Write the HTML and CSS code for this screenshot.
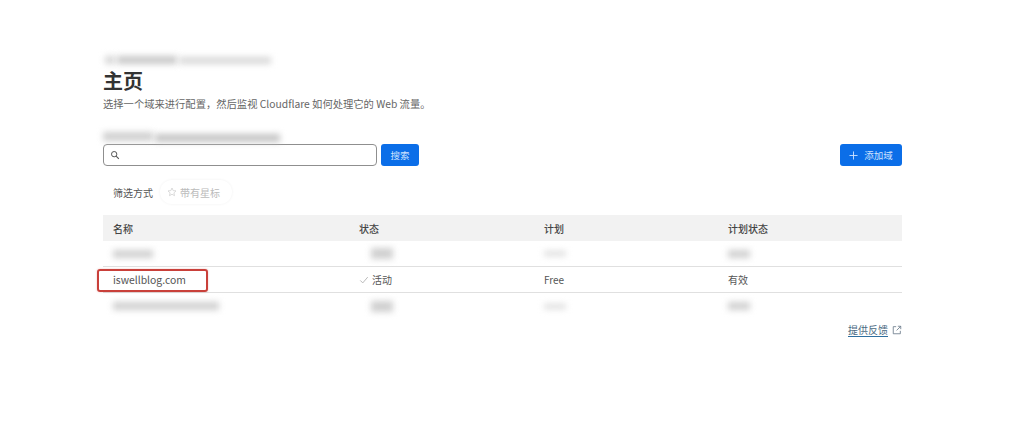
FILE: index.html
```html
<!DOCTYPE html>
<html lang="zh">
<head>
<meta charset="utf-8">
<title>主页</title>
<link rel="stylesheet" href="styles.css">
</head>
<body>
<main class="page">
  <div class="smudge-row crumb"><span class="smudge s-a"></span><span class="smudge s-b"></span><span class="smudge s-c"></span></div>
  <h1 class="title">主页</h1>
  <p class="subtitle">选择一个域来进行配置，然后监视 Cloudflare 如何处理它的 Web 流量。</p>
  <div class="smudge-row account"><span class="smudge s-d"></span><span class="smudge s-e"></span></div>
  <div class="toolbar">
    <div class="search-box">
      <svg class="search-icon" viewBox="0 0 12 12" width="10" height="10"><circle cx="5" cy="5" r="3.2" fill="none" stroke="#555" stroke-width="1.2"/><path d="M7.4 7.4 10.6 10.6" stroke="#555" stroke-width="1.3"/></svg>
    </div>
    <button class="btn btn-search">搜索</button>
    <button class="btn btn-add"><svg viewBox="0 0 10 10" width="9" height="9"><path d="M5 .5v9M.5 5h9" stroke="#cfe3ff" stroke-width="1"/></svg><span>添加域</span></button>
  </div>
  <div class="filter">
    <span class="filter-label">筛选方式</span>
    <span class="chip"><svg viewBox="0 0 12 12" width="10" height="10"><path d="M6 1.2 7.4 4.3 10.8 4.7 8.3 7 9 10.4 6 8.7 3 10.4 3.7 7 1.2 4.7 4.6 4.3Z" fill="none" stroke="#cfcfcf" stroke-width=".9"/></svg>带有星标</span>
  </div>
  <div class="table">
    <div class="row head"><span>名称</span><span>状态</span><span>计划</span><span>计划状态</span></div>
    <div class="row">
      <span><i class="smudge cell w-name"></i></span>
      <span class="status-cell"><i class="smudge cell w-short tall"></i></span>
      <span><i class="smudge cell w-short faint"></i></span>
      <span><i class="smudge cell w-short"></i></span>
    </div>
    <div class="row">
      <span class="domain-cell">iswellblog.com<b class="highlight"></b></span>
      <span class="active"><svg viewBox="0 0 12 12" width="10" height="10"><path d="M1.5 6.5 4.5 9.5 10.5 2.5" fill="none" stroke="#b4b4b4" stroke-width="1.1"/></svg>活动</span>
      <span>Free</span>
      <span>有效</span>
    </div>
    <div class="row last">
      <span><i class="smudge cell w-long"></i></span>
      <span class="status-cell"><i class="smudge cell w-short tall"></i></span>
      <span><i class="smudge cell w-short faint"></i></span>
      <span><i class="smudge cell w-short"></i></span>
    </div>
  </div>
  <div class="feedback">
    <a class="feedback-link">提供反馈</a>
    <svg viewBox="0 0 12 12" width="10" height="10"><path d="M5 2H1.5v8.5H10V7M7 1.5h3.5V5M10.5 1.5 5.5 6.5" fill="none" stroke="#6a7b8a" stroke-width="1"/></svg>
  </div>
</main>
</body>
</html>
```
FILE: styles.css
```css
* { box-sizing: border-box; }
html, body { margin: 0; height: 100%; background: #fff; overflow: hidden; }
body { font-family: "Noto Sans CJK SC", "Noto Sans", sans-serif; color: #444; }
.page { width: 799px; margin-left: 103px; padding-top: 54px; }
.smudge-row { display: flex; gap: 2px; align-items: center; }
.smudge { display: block; background: #c4c4c4; filter: blur(3px); }
.crumb { height: 12px; }
.s-a { width: 10px; height: 8px; margin-left: 2px; background: #d6d6d6; }
.s-b { width: 60px; height: 8px; background: #c8c8c8; }
.s-c { width: 92px; height: 7px; background: #d8d8d8; }
.title { margin: 3px 0 0; font-size: 20px; line-height: 24px; font-weight: 700; color: #333; }
.subtitle { margin: 3px 0 0; font-size: 10.3px; line-height: 15px; color: #666; }
.account { height: 12px; margin-top: 20px; }
.s-d { width: 50px; height: 9px; margin-top: -2px; background: #d0d0d0; }
.s-e { width: 125px; height: 8px; margin-top: 2px; background: #c4c4c4; }
.toolbar { display: flex; align-items: stretch; height: 22px; margin-top: 1px; }
.search-box { width: 274px; border: 1px solid #8f8f8f; border-radius: 4px; display: flex; align-items: center; padding-left: 6px; }
.btn { border: 0; border-radius: 3px; background: #0b6ee8; color: #cfe3ff; font: inherit; font-size: 9.5px; padding: 0; }
.btn-search { width: 38px; margin-left: 4px; }
.btn-add { width: 62px; margin-left: auto; display: flex; align-items: center; justify-content: center; gap: 6px; }
.filter { display: flex; align-items: center; height: 24px; margin-top: 14px; padding-left: 10px; font-size: 10px; }
.filter-label { color: #555; }
.chip { display: flex; align-items: center; gap: 3px; margin-left: 7px; color: #bbb; border-radius: 12px; box-shadow: 0 0 3px #f0f0f0; height: 24px; padding: 0 12px 0 7px; }
.table { margin-top: 11px; }
.row { display: grid; grid-template-columns: 246px 185px 184px 1fr; align-items: center; height: 26px; padding-left: 10px; font-size: 10px; border-bottom: 1px solid #e0e0e0; color: #555; }
.row.head { background: #f2f2f2; border-bottom: 0; font-weight: 500; color: #444; }
.row.last { border-bottom: 0; }
.cell { height: 8px; background: #d0d0d0; }
.cell.faint { background: #dcdcdc; height: 5px; }
.cell.tall { height: 11px; }
.w-name { width: 40px; }
.w-short { width: 22px; }
.w-long { width: 106px; }
.status-cell { padding-left: 12px; }
.domain-cell { position: relative; font-size: 10.4px; color: #555; }
.highlight { position: absolute; left: -16px; top: -3px; width: 111px; height: 23px; border: 2px solid #c9403a; border-radius: 3px; box-shadow: 0 0 2px rgba(200,60,60,.35); }
.active { display: flex; align-items: center; gap: 3px; }
.feedback { display: flex; justify-content: flex-end; align-items: center; gap: 4px; margin-top: 4px; font-size: 10px; }
.feedback-link { color: #4a6a82; border-bottom: 1px solid #2f6f9f; line-height: 13px; }
```
